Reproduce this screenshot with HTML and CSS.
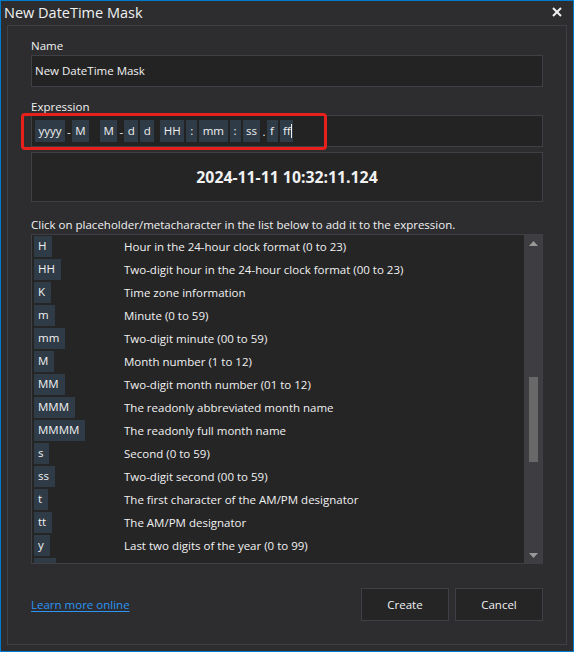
FILE: index.html
```html
<!DOCTYPE html>
<html>
<head>
<meta charset="utf-8">
<link rel="stylesheet" href="styles.css">
</head>
<body>
<div class="window">
  <div class="titlebar">
    <span class="title">New DateTime Mask</span>
    <svg class="close" width="10" height="10" viewBox="0 0 10 10"><path d="M1 1 L9 9 M9 1 L1 9" stroke="#f1f1f1" stroke-width="2"/></svg>
  </div>
  <div class="panel">
    <div class="label">Name</div>
    <div class="input name-input">New DateTime Mask</div>
    <div class="label label-expr">Expression</div>
    <div class="expr-wrap">
      <div class="input expr">
        <span class="chip">yyyy</span><span class="sep">-</span><span class="chip">M</span><span class="chip gap">M</span><span class="sep">-</span><span class="chip">d</span><span class="chip">d</span><span class="chip space">HH</span><span class="chip">:</span><span class="chip">mm</span><span class="chip">:</span><span class="chip">ss</span><span class="sep">.</span><span class="chip">f</span><span class="chip cursor">ff</span>
      </div>
      <div class="highlight"></div>
    </div>
    <div class="preview">2024-11-11 10:32:11.124</div>
    <div class="hint">Click on placeholder/metacharacter in the list below to add it to the expression.</div>
    <div class="list">
      <div class="rows">
        <div class="row"><span class="key"><span class="chip">H</span></span><span class="desc">Hour in the 24-hour clock format (0 to 23)</span></div>
        <div class="row"><span class="key"><span class="chip">HH</span></span><span class="desc">Two-digit hour in the 24-hour clock format (00 to 23)</span></div>
        <div class="row"><span class="key"><span class="chip">K</span></span><span class="desc">Time zone information</span></div>
        <div class="row"><span class="key"><span class="chip">m</span></span><span class="desc">Minute (0 to 59)</span></div>
        <div class="row"><span class="key"><span class="chip">mm</span></span><span class="desc">Two-digit minute (00 to 59)</span></div>
        <div class="row"><span class="key"><span class="chip">M</span></span><span class="desc">Month number (1 to 12)</span></div>
        <div class="row"><span class="key"><span class="chip">MM</span></span><span class="desc">Two-digit month number (01 to 12)</span></div>
        <div class="row"><span class="key"><span class="chip">MMM</span></span><span class="desc">The readonly abbreviated month name</span></div>
        <div class="row"><span class="key"><span class="chip">MMMM</span></span><span class="desc">The readonly full month name</span></div>
        <div class="row"><span class="key"><span class="chip">s</span></span><span class="desc">Second (0 to 59)</span></div>
        <div class="row"><span class="key"><span class="chip">ss</span></span><span class="desc">Two-digit second (00 to 59)</span></div>
        <div class="row"><span class="key"><span class="chip">t</span></span><span class="desc">The first character of the AM/PM designator</span></div>
        <div class="row"><span class="key"><span class="chip">tt</span></span><span class="desc">The AM/PM designator</span></div>
        <div class="row"><span class="key"><span class="chip">y</span></span><span class="desc">Last two digits of the year (0 to 99)</span></div>
        <div class="row"><span class="key"><span class="chip">yy</span></span><span class="desc">Two-digit year (00 to 99)</span></div>
      </div>
      <div class="scrollbar">
        <svg class="arrow" width="9" height="5" viewBox="0 0 9 5"><path d="M0 5 L4.5 0 L9 5 Z" fill="#999999"/></svg>
        <div class="track"><div class="thumb"></div></div>
        <svg class="arrow" width="9" height="5" viewBox="0 0 9 5"><path d="M0 0 L4.5 5 L9 0 Z" fill="#999999"/></svg>
      </div>
    </div>
    <div class="footer">
      <a class="link" href="#">Learn more online</a>
      <div class="buttons">
        <div class="btn">Create</div>
        <div class="btn">Cancel</div>
      </div>
    </div>
  </div>
</div>
</body>
</html>
```

FILE: styles.css
```css
* { box-sizing: border-box; }
html, body { margin: 0; padding: 0; background: #2d2d30; }
body {
  font-family: "Open Sans", "Noto Sans", sans-serif;
  font-size: 11.5px;
  color: #f1f1f1;
}
.window {
  width: 574px;
  height: 652px;
  border: 1px solid #007acc;
  background: #2d2d30;
  display: flex;
  flex-direction: column;
}
.titlebar {
  height: 24px;
  display: flex;
  align-items: center;
  justify-content: space-between;
  padding: 0 11px 0 3px;
}
.title { font-size: 14.5px; line-height: 24px; }
.close { display: block; margin-top: -2px; }
.panel {
  flex: 1;
  margin: 0 6px 6px 6px;
  border: 1px solid #3f3f46;
  padding: 12px 23px 23px 23px;
  display: flex;
  flex-direction: column;
}
.label { line-height: 16px; height: 16px; margin-bottom: 1px; }
.label-expr { margin-top: 12px; margin-bottom: 0; }
.input {
  height: 32px;
  background: #232324;
  border: 1px solid #3f3f46;
}
.name-input { padding: 0 3px; line-height: 30px; }
.expr-wrap { position: relative; }
.expr {
  display: flex;
  align-items: center;
  padding: 0 3px;
}
.chip {
  display: inline-block;
  background: #2f3b47;
  height: 22px;
  line-height: 21px;
  padding: 0 3.5px;
  min-width: 11px;
  text-align: center;
  margin-right: 2px;
  white-space: nowrap;
}
.expr .chip.gap { margin-left: 9px; }
.expr .chip.space { margin-left: 4px; }
.sep { padding: 0 1px 0 0; }
.cursor { position: relative; padding-right: 1px; }
.cursor::after {
  content: "";
  display: inline-block;
  width: 1px;
  height: 14px;
  background: #f1f1f1;
  vertical-align: -3px;
}
.highlight {
  position: absolute;
  left: -10px;
  top: -2px;
  width: 306px;
  height: 37px;
  border: 3px solid #e8201c;
  border-radius: 4px;
}
.preview {
  margin-top: 5px;
  height: 50px;
  background: #252526;
  border: 1px solid #3f3f46;
  display: flex;
  align-items: center;
  justify-content: center;
  font-weight: bold;
  font-size: 15.8px;
}
.hint { margin-top: 15px; line-height: 16px; height: 16px; }
.list {
  margin-top: 1px;
  height: 330px;
  border: 1px solid #3f3f46;
  background: #252526;
  display: flex;
  overflow: hidden;
}
.rows { flex: 1; padding: 0 0 0 2px; overflow: hidden; }
.row { height: 23px; display: flex; align-items: center; }
.key { width: 90px; flex: none; }
.key .chip { height: 21px; line-height: 19px; padding: 0 6px 0 4px; margin: 0; text-align: left; }
.desc { white-space: nowrap; }
.scrollbar {
  width: 18px;
  flex: none;
  background: #3e3e42;
  display: flex;
  flex-direction: column;
  align-items: center;
  padding: 6px 0 5px 0;
}
.arrow { display: block; }
.track { flex: 1; width: 100%; padding: 131px 4px 0 4px; }
.thumb { width: 9px; height: 85px; background: #686868; margin-left: 1px; }
.footer {
  margin-top: 24px;
  display: flex;
  align-items: center;
  justify-content: space-between;
}
.link { color: #2a95f5; text-decoration: underline; text-underline-offset: 2px; }
.buttons { display: flex; gap: 6px; }
.btn {
  width: 88px;
  height: 33px;
  background: #252526;
  border: 1px solid #3f3f46;
  display: flex;
  align-items: center;
  justify-content: center;
}
```
